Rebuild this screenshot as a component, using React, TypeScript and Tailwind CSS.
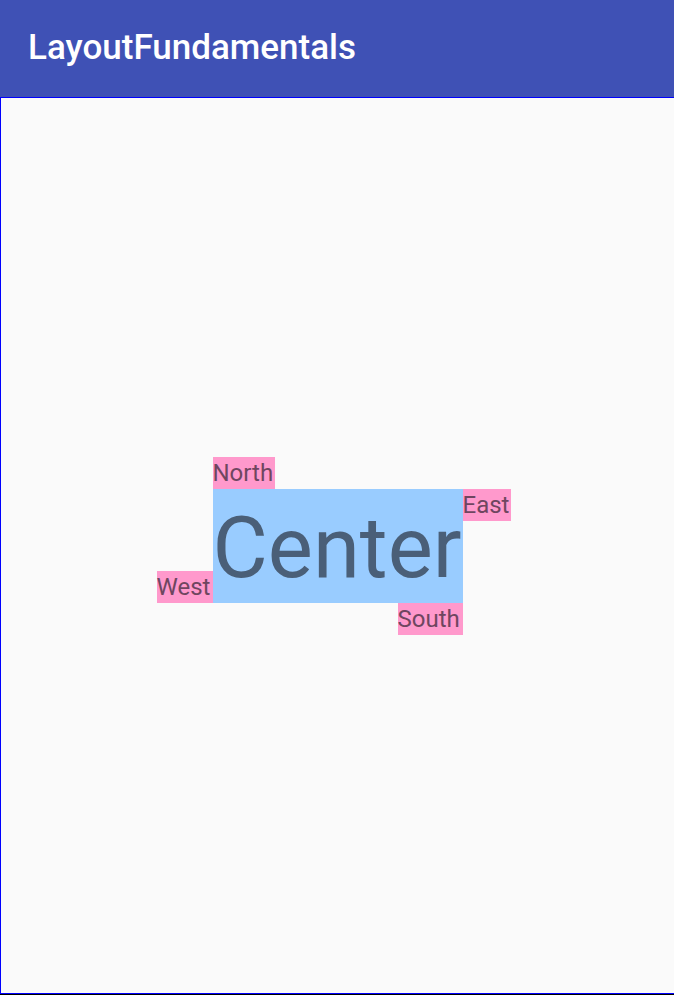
import React from "react";

function Label({ text, className }: { text: string; className: string }) {
  return (
    <div
      className={`h-[32px] bg-[#ff99cc] text-[24px] leading-[33px] text-[#6f4660] ${className}`}
    >
      {text}
    </div>
  );
}

export default function App() {
  return (
    <div
      className="flex h-[995px] w-[674px] flex-col bg-[#fafafa]"
      style={{ fontFamily: "Roboto, 'Noto Sans', sans-serif" }}
    >
      {/* App bar */}
      <header className="flex h-[97px] shrink-0 items-center bg-[#3f51b5] pl-[28px]">
        <h1 className="text-[35px] font-medium text-white">LayoutFundamentals</h1>
      </header>

      {/* Content frame */}
      <div className="flex flex-1 flex-col border-b border-black">
        <main className="grid flex-1 grid-cols-[1fr_auto_1fr] grid-rows-[1fr_auto_1fr] border-l border-t border-b border-[#0000ff]">
          <Label text="North" className="col-start-2 row-start-1 w-[62px] self-end justify-self-start" />
          <Label text="West" className="col-start-1 row-start-2 w-[56px] self-end justify-self-end" />
          <div className="col-start-2 row-start-2 flex h-[114px] w-[250px] items-start bg-[#99ccff] pt-[2px]">
            <span className="text-[85px] leading-[114px] text-[#4a5f78]">Center</span>
          </div>
          <Label text="East" className="col-start-3 row-start-2 w-[48px] self-start justify-self-start" />
          <Label text="South" className="col-start-2 row-start-3 w-[65px] self-start justify-self-end" />
        </main>
      </div>
    </div>
  );
}
